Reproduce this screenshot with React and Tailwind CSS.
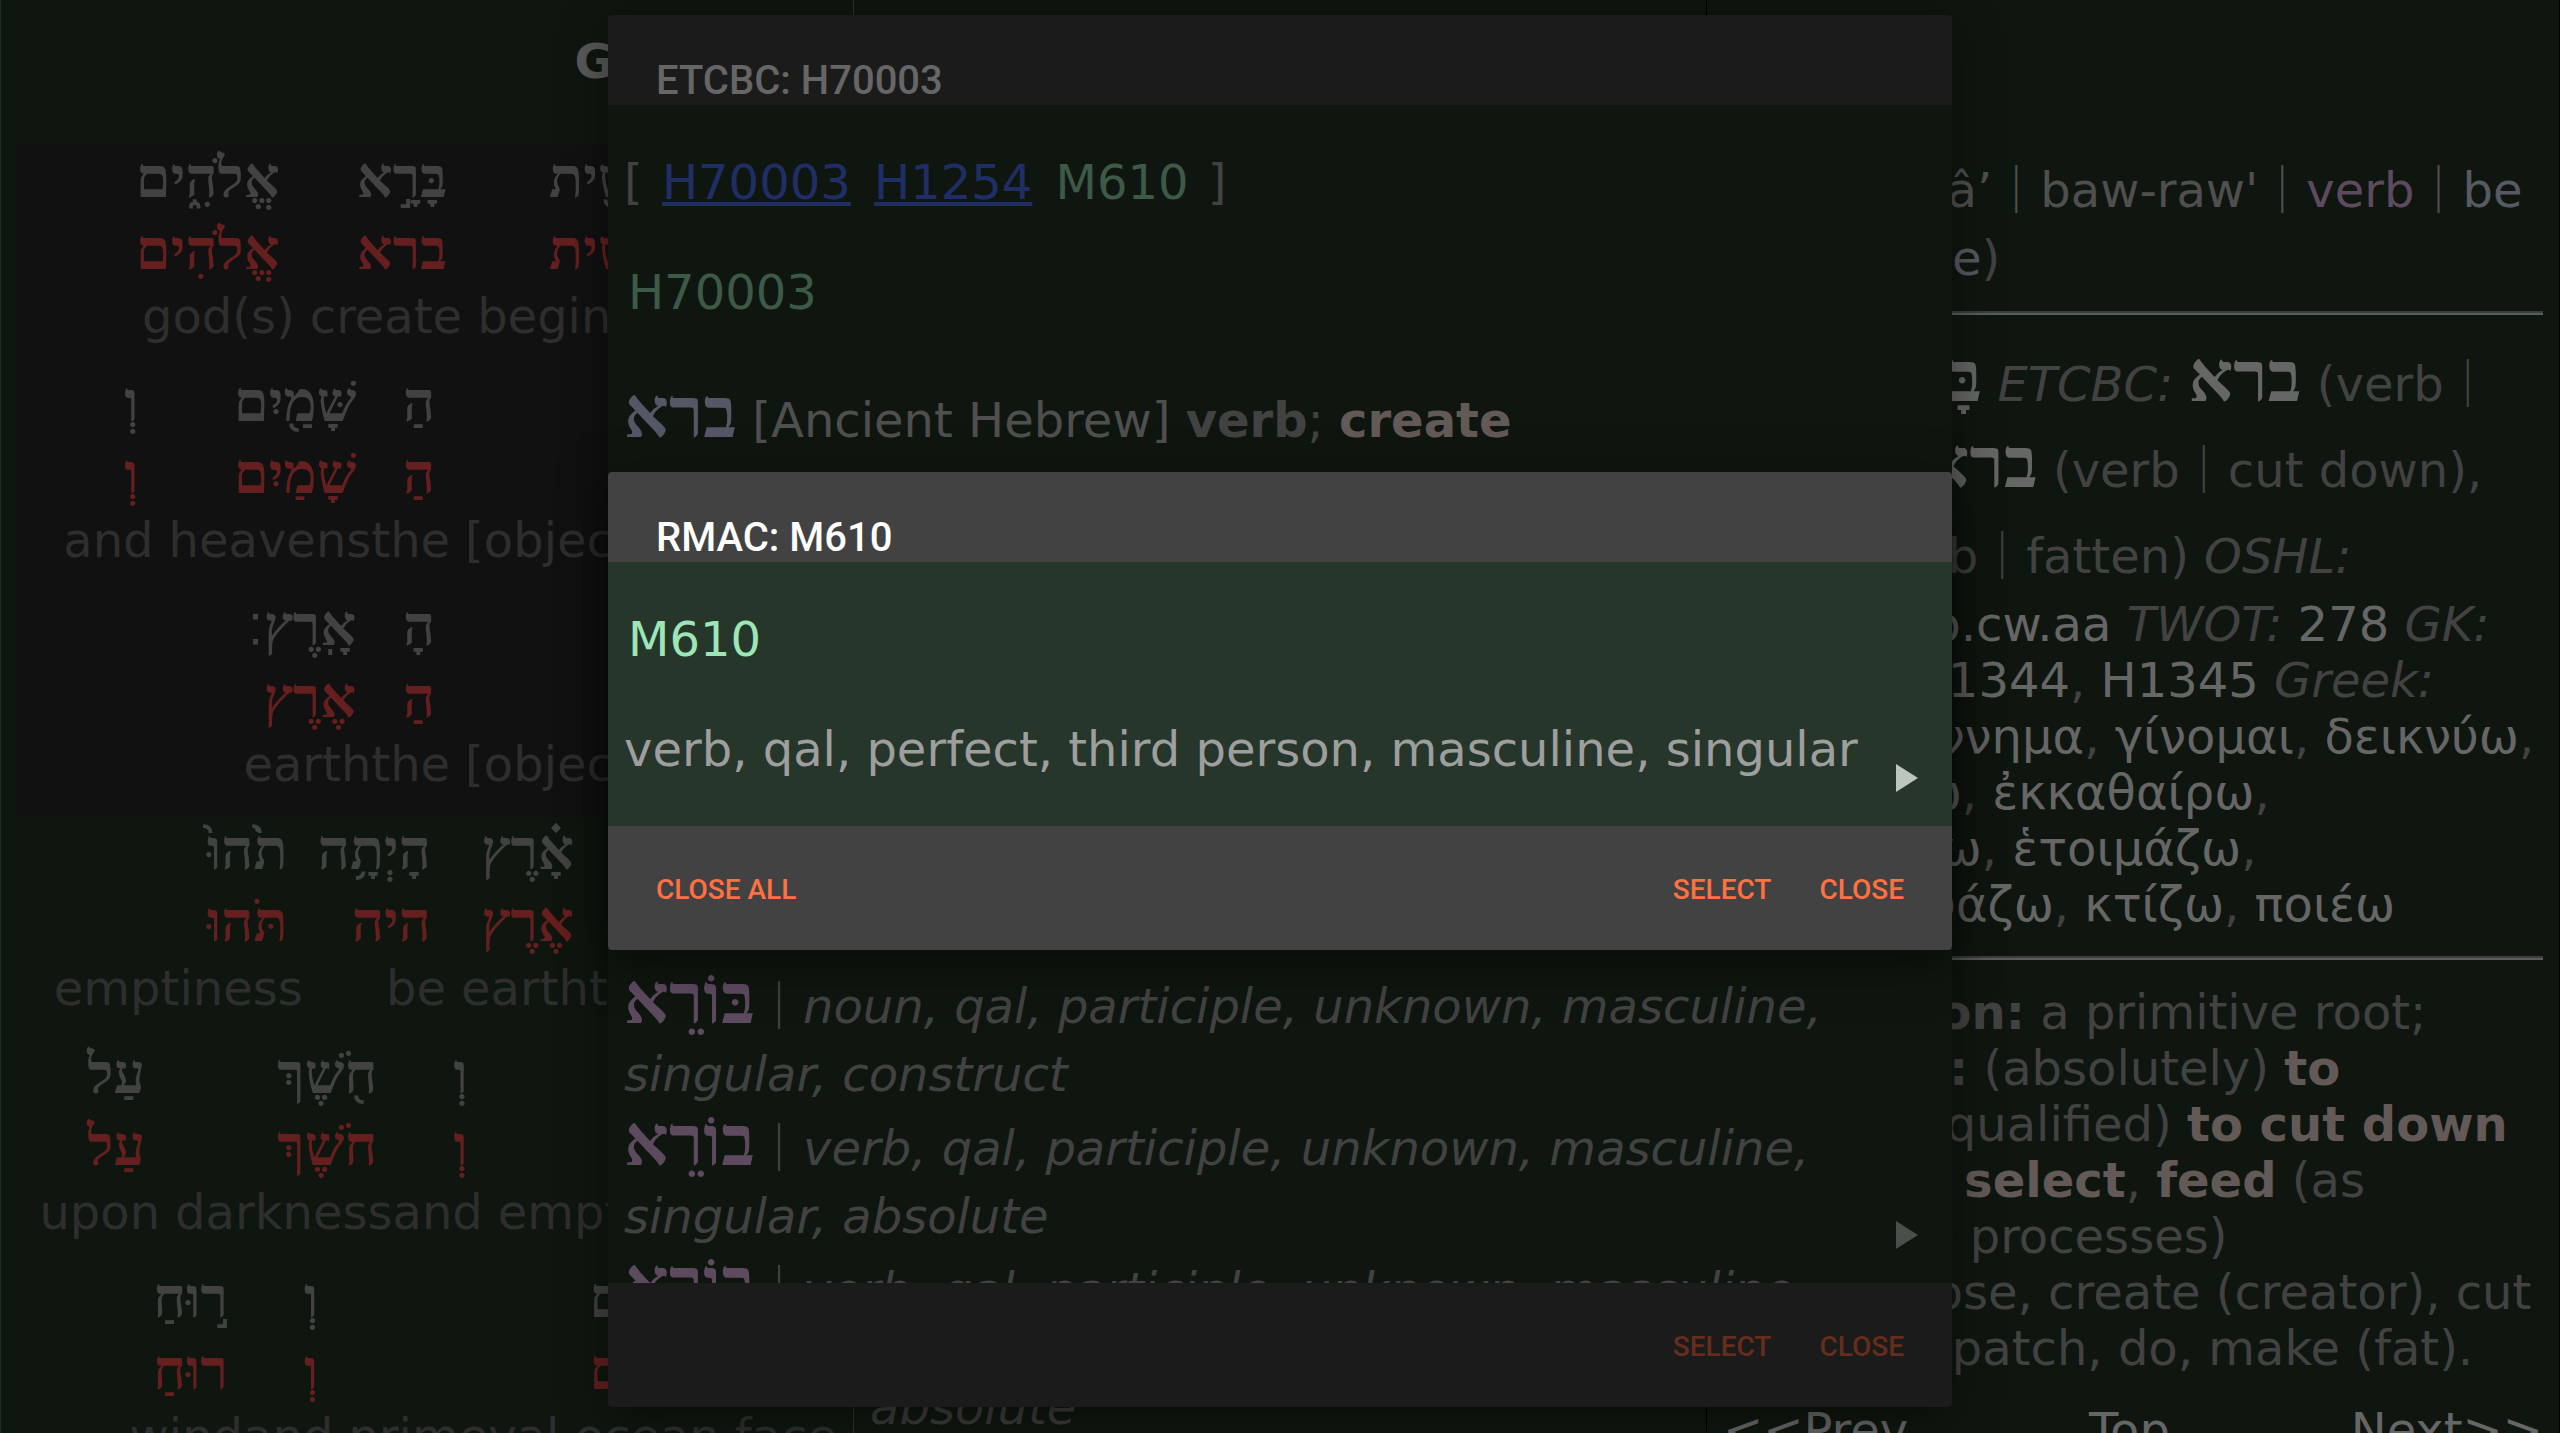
import React from "react";

// Interlinear rows, listed in reading order (right to left).
const rows = [
  { lit: true, words: [
    { num: "1" },
    { h: "בְּ", l: "בְּ", g: "in" },
    { h: "רֵאשִׁ֖ית", l: "רֵאשִׁית", g: "beginning", sp: true },
    { h: "בָּרָ֣א", l: "ברא", g: "create", sp: true },
    { h: "אֱלֹהִ֑ים", l: "אֱלֹהִים", g: "god(s)", sp: true },
  ] },
  { lit: true, words: [
    { h: "אֵ֥ת", l: "אֵת", g: "[object marker]", sp: true },
    { h: "הַ", l: "הַ", g: "the" },
    { h: "שָּׁמַ֖יִם", l: "שָׁמַיִם", g: "heavens", sp: true },
    { h: "וְ", l: "וְ", g: "and" },
  ] },
  { lit: true, words: [
    { h: "אֵ֥ת", l: "אֵת", g: "[object marker]", sp: true },
    { h: "הָ", l: "הַ", g: "the" },
    { h: "אָֽרֶץ", l: "אֶרֶץ", g: "earth", sp: true, end: "׃" },
  ] },
  { words: [
    { num: "2" },
    { h: "וְ", l: "וְ", g: "and", sp: true },
    { h: "הָ", l: "הַ", g: "the" },
    { h: "אָ֗רֶץ", l: "אֶרֶץ", g: "earth", sp: true },
    { h: "הָיְתָ֥ה", l: "היה", g: "be", sp: true },
    { h: "תֹ֙הוּ֙", l: "תֹּהוּ", g: "emptiness", sp: true },
  ] },
  { words: [
    { h: "וָ", l: "וְ", g: "and" },
    { h: "בֹ֔הוּ", l: "בֹּהוּ", g: "emptiness", sp: true },
    { h: "וְ", l: "וְ", g: "and" },
    { h: "חֹ֖שֶׁךְ", l: "חֹשֶׁךְ", g: "darkness", sp: true },
    { h: "עַל", l: "עַל", g: "upon", sp: true },
  ] },
  { words: [
    { h: "פְּנֵ֣י", l: "פָּנֶה", g: "face", sp: true },
    { h: "תְהֹ֑ום", l: "תְּהֹום", g: "primeval ocean", sp: true },
    { h: "וְ", l: "וְ", g: "and" },
    { h: "ר֣וּחַ", l: "רוּחַ", g: "wind", sp: true },
  ] },
];

const forms = [
  { w: "בָּרָא", t: "verb, qal, perfect, third person, masculine, singular" },
  { w: "בָּרָא", t: "verb, qal, perfect, third person, masculine, plural" },
  { w: "בְּרֹא", t: "verb, qal, infinitive, unknown, unknown, construct" },
  { w: "בּוֹרֵא", t: "noun, qal, participle, unknown, masculine, singular, construct" },
  { w: "בוֹרֵא", t: "verb, qal, participle, unknown, masculine, singular, absolute" },
  { w: "בוֹרֵא", t: "verb, qal, participle, unknown, masculine, singular, absolute" },
];

function Word({ word }) {
  if (word.num) {
    return <div className="w-16 shrink-0 text-[#3a3a3a]">{word.num}</div>;
  }
  return (
    <div className="flex shrink-0 flex-col items-start whitespace-nowrap">
      <span className="px-[15px] font-['Liberation_Serif',serif] text-[56px] leading-[66px] font-bold text-[#424242]">
        {word.h}
        {word.end && <span className="font-['DejaVu_Sans',sans-serif] leading-[0] font-normal">{word.end}</span>}
      </span>
      <span className="mt-1.5 px-[15px] font-['Liberation_Serif',serif] text-[56px] leading-[66px] font-bold text-[#651f1f]">{word.l}</span>
      <span dir="ltr" className={word.sp ? "mt-[5px] pl-[15px] text-[#2e2e2e]" : "mt-[5px] text-[#2e2e2e]"}>{word.g}</span>
    </div>
  );
}

function Interlinear() {
  return (
    <section dir="rtl" className="flex min-w-0 flex-1 flex-col overflow-hidden border-l border-[#1b2f20] px-4 pt-[33px]">
      <h1 dir="ltr" className="text-right font-bold text-[#5a5a5a]">Genesis 1</h1>
      <div className="mt-14">
        {rows.map((row, i) => (
          <div key={i} className={row.lit ? "flex h-[224px] bg-[#111111]" : "flex h-[224px]"}>
            {row.words.map((w, j) => <Word key={j} word={w} />)}
          </div>
        ))}
      </div>
    </section>
  );
}

const Bar = () => <span className="font-['Noto_Sans_CJK_SC',sans-serif] leading-[0] font-normal not-italic">｜</span>;

function Forms({ items }) {
  return items.map((f, i) => (
    <p key={i} className="pt-1.5 leading-[68px] text-[#424242]">
      <span className="font-['Liberation_Serif',serif] text-[70px] leading-[0] font-bold text-[#5d4a5f]">{f.w}</span>
      <Bar />
      <i>{f.t}</i>
    </p>
  ));
}

function Morphology() {
  return (
    <section className="flex min-w-0 flex-1 flex-col justify-end overflow-hidden border-l border-[#2c332c] px-4">
      <p className="leading-[52px] text-[#3a3a3a] italic">absolute</p>
    </section>
  );
}

const Ref = ({ children }) => <span className="text-[#666666]">{children}</span>;
const Gloss = ({ children }) => <b className="text-[#635957]">{children}</b>;
const HebRef = ({ children }) => (
  <b className="font-['Liberation_Serif',serif] text-[70px] leading-[0] text-[#666666]">{children}</b>
);
const Rule = () => <hr className="my-6 h-1 border-0 border-t-2 border-b-2 border-t-[#3c3c3c] border-b-[#5c5c5c]" />;

function Lexicon() {
  return (
    <section className="min-w-0 flex-1 overflow-hidden border-r border-l border-black px-4 pt-[156px] whitespace-nowrap text-[#424242]">
      <div className="h-[155px] leading-[68px]">
        <p className="text-[#4f4f4f]">
          <b className="font-['Liberation_Serif',serif] text-[60px] leading-[0]">ברא</b><Bar />bârâ’<Bar />baw-raw'<Bar /><span className="text-[#5d4a5f]">verb</span><Bar /><span className="text-[#565a62]">be</span>
        </p>
        <p><span className="text-[#565a62]">cut, create</span>)</p>
      </div>
      <hr className="h-1 border-0 border-t-2 border-b-2 border-t-[#3c3c3c] border-b-[#5c5c5c]" />
      <div className="mt-[41px] flex flex-col gap-[30px]">
        <p><i>Main:</i> <HebRef>בָּרָא</HebRef> <i>ETCBC:</i> <HebRef>ברא</HebRef> (verb<Bar /></p>
        <p>create), <HebRef>ברא</HebRef> (verb<Bar />cut down),</p>
        <p><HebRef>ברא</HebRef> (verb<Bar />fatten) <i>OSHL:</i></p>
      </div>
      <div className="mt-3">
        <p><Ref>b.cw.az</Ref>, <Ref>b.cw.aa</Ref> <i>TWOT:</i> <Ref>278</Ref> <i>GK:</i></p>
        <p><Ref>H1343</Ref>, <Ref>H1344</Ref>, <Ref>H1345</Ref> <i>Greek:</i></p>
        <p><Ref>ἄρχω</Ref>, <Ref>γέννημα</Ref>, <Ref>γίνομαι</Ref>, <Ref>δεικνύω</Ref>,</p>
        <p><Ref>διατάσσω</Ref>, <Ref>ἐκκαθαίρω</Ref>,</p>
        <p><Ref>ἐπιστρέφω</Ref>, <Ref>ἑτοιμάζω</Ref>,</p>
        <p><Ref>κατασκευάζω</Ref>, <Ref>κτίζω</Ref>, <Ref>ποιέω</Ref></p>
      </div>
      <Rule />
      <p><b>Derivation:</b> a primitive root;</p>
      <p><b>Strong's:</b> (absolutely) <Gloss>to</Gloss></p>
      <p><Gloss>create</Gloss>; (qualified) <Gloss>to cut down</Gloss></p>
      <p>(a wood), <Gloss>select</Gloss>, <Gloss>feed</Gloss> (as</p>
      <p>formative processes)</p>
      <p><b>KJV:</b> choose, create (creator), cut</p>
      <p>down, dispatch, do, make (fat).</p>
      <nav className="mt-[26px] flex justify-between text-[#666666]">
        <a href="#prev">&lt;&lt;Prev</a>
        <a href="#top">Top</a>
        <a href="#next">Next&gt;&gt;</a>
      </nav>
    </section>
  );
}

function Etcbc() {
  return (
    <div className="absolute inset-0 flex items-center justify-center pt-[15px] pb-[26px]">
      <div role="dialog" aria-label="ETCBC: H70003" className="flex h-full w-[52.5%] flex-col overflow-hidden rounded bg-[#1b1b1b] shadow-[0_8px_48px_rgba(0,0,0,0.45)]">
        <h2 className="px-12 pt-[42px] font-[Roboto,sans-serif] text-[40px] leading-[48px] font-medium text-[#666666]">ETCBC: H70003</h2>
        <div className="relative min-h-0 flex-1 overflow-hidden bg-[#0f160f] px-4 pt-[49px]">
          <p className="text-[#424242]">
            [ <a href="#h70003" className="mx-1 text-[#1f2f66] underline">H70003</a>{" "}
            <a href="#h1254" className="mx-1 text-[#1f2f66] underline">H1254</a>{" "}
            <span className="mx-1 text-[#3d5a48]">M610</span> ]
          </p>
          <p className="mt-[54px] pl-1 text-[#3d5a48]">H70003</p>
          <p className="mt-[72px] text-[#424242]">
            <span className="font-['Liberation_Serif',serif] text-[70px] leading-[0] font-bold text-[#565666]">ברא</span>{" "}
            <span className="text-[#4f4f4f]">[Ancient Hebrew]</span> <b>verb</b>; <Gloss>create</Gloss>
          </p>
          <div className="mt-[92px]">
            <Forms items={forms} />
          </div>
          <svg className="absolute right-[34px] bottom-[34px] h-7 w-[22px] fill-[#4b4e4b]" viewBox="0 0 22 28"><path d="M0 0L22 14L0 28Z" /></svg>
        </div>
        <div className="flex h-[124px] items-center justify-end gap-12 px-12 pt-[3px] font-[Roboto,sans-serif] text-[28px] font-medium text-[#652d1b]">
          <button type="button">SELECT</button>
          <button type="button">CLOSE</button>
        </div>
      </div>
    </div>
  );
}

function Rmac() {
  return (
    <div className="absolute inset-0 flex items-center justify-center pt-[15px] pb-[26px]">
      <div role="dialog" aria-modal="true" aria-label="RMAC: M610" className="flex w-[52.5%] flex-col overflow-hidden rounded bg-[#424242] shadow-[0_12px_48px_rgba(0,0,0,0.5)]">
        <h2 className="px-12 pt-[42px] font-[Roboto,sans-serif] text-[40px] leading-[48px] font-medium text-white">RMAC: M610</h2>
        <div className="relative flex flex-col gap-[54px] bg-[#26362a] px-4 py-[49px]">
          <p className="pl-1 text-[#9ee6b8]">M610</p>
          <p className="text-[#9e9e9e]">verb, qal, perfect, third person, masculine, singular</p>
          <svg className="absolute right-[34px] bottom-[34px] h-7 w-[22px] fill-[#bec5bf]" viewBox="0 0 22 28"><path d="M0 0L22 14L0 28Z" /></svg>
        </div>
        <div className="flex h-[124px] items-center gap-12 px-12 pt-[3px] font-[Roboto,sans-serif] text-[28px] font-medium text-[#ff7043]">
          <button type="button" className="mr-auto">CLOSE ALL</button>
          <button type="button">SELECT</button>
          <button type="button">CLOSE</button>
        </div>
      </div>
    </div>
  );
}

export default function App() {
  return (
    <main className="relative flex h-screen overflow-hidden bg-[#0f160f] font-['DejaVu_Sans',sans-serif] text-[48px] leading-[56px]">
      <Interlinear />
      <Morphology />
      <Lexicon />
      <Etcbc />
      <Rmac />
    </main>
  );
}
